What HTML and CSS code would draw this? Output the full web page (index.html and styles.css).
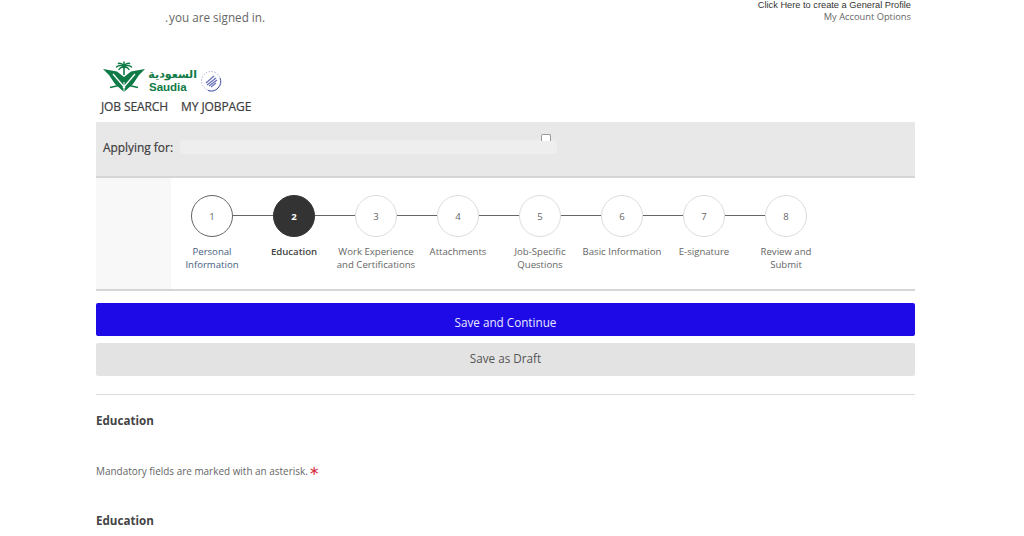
FILE: index.html
```html
<!DOCTYPE html>
<html lang="en">
<head>
<meta charset="utf-8">
<title>Saudia Careers - Education</title>
<link rel="stylesheet" href="styles.css">
</head>
<body>
<div class="page">
  <header class="top">
    <p class="signed">.<span>you are signed in.</span></p>
    <div class="account">
      <a class="general">Click Here to create a General Profile</a>
      <a class="options">My Account Options</a>
    </div>
  </header>
  <div class="logo">
    <svg class="emblem" width="44" height="32" viewBox="0 0 44 32" aria-hidden="true">
      <path fill="#0f7a45" d="M1 8 L15 10.500 L22 16 L29 10.500 L43 8 L37 14 L31 23 L22 31 L13 23 L7 14 Z"/>
      <path fill="none" stroke="#fff" stroke-width="1.300" d="M11 13 L23 27 M33 13 L21 27"/>
      <path fill="#fff" d="M21.500 21h1v10h-1z"/>
      <path fill="#0f7a45" d="M21.200 5h1.600v9h-1.600z"/>
      <path fill="none" stroke="#0f7a45" stroke-width="1.500" stroke-linecap="round" d="M22 5 L22 1 M22 5 C20 2.500 18 2 16.500 2.500 M22 5 C24 2.500 26 2 27.500 2.500 M22 5.500 C19 4 16 4.500 14.500 6 M22 5.500 C25 4 28 4.500 29.500 6 M22 6.500 C20 6 18 6.500 17 8.500 M22 6.500 C24 6 26 6.500 27 8.500"/>
      <path fill="none" stroke="#0f7a45" stroke-width="1.400" d="M8 26.500 L19 24 M36 26.500 L25 24"/>
    </svg>
    <div class="wordmark">
      <span class="ar" lang="ar" dir="rtl">السعودية</span>
      <span class="en">Saudia</span>
    </div>
    <svg class="skyteam" width="22" height="22" viewBox="0 0 22 22" aria-hidden="true">
      <circle cx="11" cy="11" r="9.500" fill="#fff" stroke="#aab0d4" stroke-width="1" stroke-dasharray="1.500 1.500"/>
      <path d="M20 8 A9.500 9.500 0 0 1 8 20.500" fill="none" stroke="#4a55a5" stroke-width="1"/>
      <path d="M6 13 L14 6 M7 15 L16 8 M9 16 L17 10 M11 17 L16 13" stroke="#6a72b8" stroke-width="1.300" fill="none"/>
    </svg>
  </div>
  <nav class="nav"><a>JOB SEARCH</a><a>MY JOBPAGE</a></nav>
  <section class="applying">
    <span class="applying-label">Applying for:</span>
    <span class="redacted"></span>
    <span class="check"></span>
  </section>
  <section class="stepper">
    <ol class="steps">
      <li class="step visited"><span class="dot">1</span><span class="label">Personal Information</span></li>
      <li class="step current"><span class="dot">2</span><span class="label">Education</span></li>
      <li class="step"><span class="dot">3</span><span class="label">Work Experience and Certifications</span></li>
      <li class="step"><span class="dot">4</span><span class="label">Attachments</span></li>
      <li class="step"><span class="dot">5</span><span class="label">Job-Specific Questions</span></li>
      <li class="step"><span class="dot">6</span><span class="label">Basic Information</span></li>
      <li class="step"><span class="dot">7</span><span class="label">E-signature</span></li>
      <li class="step narrow"><span class="dot">8</span><span class="label">Review and Submit</span></li>
    </ol>
  </section>
  <div class="actions">
    <button class="btn primary">Save and Continue</button>
    <button class="btn secondary">Save as Draft</button>
  </div>
  <hr class="rule">
  <h2 class="heading first">Education</h2>
  <p class="mandatory">Mandatory fields are marked with an asterisk.<span class="star">∗</span></p>
  <h2 class="heading second">Education</h2>
</div>
</body>
</html>
```

FILE: styles.css
```css
* { box-sizing: border-box; }
html, body { margin: 0; padding: 0; background: #fff; }
body { height: 536px; overflow: hidden; font-family: "Open Sans", "Liberation Sans", sans-serif; color: #555; }
.page { width: 819px; margin-left: 96px; }

.top { display: flex; justify-content: space-between; height: 57px; }
.signed { margin: 9px 0 0 69px; font-size: 11.700px; line-height: 16px; color: #666; }
.signed span { margin-left: 1px; }
.account { display: flex; flex-direction: column; align-items: flex-end; padding: 0 4px 0 0; line-height: 12px; margin-top: -1px; }
.general { color: #333; font-family: "Liberation Sans", Arial, sans-serif; font-size: 9.250px; }
.options { color: #666; font-size: 9.300px; }

.logo { display: flex; align-items: flex-start; height: 39px; padding: 4px 0 0 6px; }
.emblem { flex: none; }
.wordmark { display: flex; flex-direction: column; align-items: flex-start; margin-left: 3px; color: #0f7a45; width: 48px; padding-top: 8px; }
.ar { font-family: "DejaVu Sans", sans-serif; font-size: 11px; line-height: 12px; font-weight: 700; align-self: stretch; text-align: right; }
.en { font-family: "Liberation Sans", sans-serif; font-size: 11.500px; line-height: 12px; font-weight: 700; }
.skyteam { margin: 9px 0 0 3px; }

.nav { display: flex; gap: 13px; height: 26px; padding: 1px 0 0 5px; font-size: 12px; line-height: 20px; color: #3d3d3d; letter-spacing: -.1px; -webkit-text-stroke: .2px #3d3d3d; }

.applying { position: relative; display: flex; align-items: flex-start; height: 56px; background: #e8e8e8; border-bottom: 2px solid #d6d6d6; padding: 16px 0 0 7px; }
.applying-label { font-size: 11.900px; line-height: 18px; color: #3d3d3d; -webkit-text-stroke: .2px #3d3d3d; }
.redacted { width: 377px; height: 14px; margin: 2px 0 0 7px; background: #eeeeee; border-radius: 4px; }
.check { position: absolute; left: 445px; top: 12px; width: 10px; height: 7px; background: #fff; border: 1px solid #999; border-bottom: 0; border-radius: 2px 2px 0 0; }

.stepper { height: 113px; background: #f8f8f8; border-bottom: 2px solid #d6d6d6; padding-left: 75px; }
.steps { display: flex; height: 111px; margin: 0; padding: 17px 0 0; list-style: none; background: #fff; }
.step { position: relative; display: flex; flex-direction: column; align-items: center; width: 82px; }
.step:not(:last-child)::after { content: ""; position: absolute; left: 62px; top: 20px; width: 41px; height: 1px; background: #666; }
.dot { display: flex; align-items: center; justify-content: center; width: 42px; height: 42px; border: 1px solid #ddd; border-radius: 50%; font-size: 9.600px; color: #666; background: #fff; }
.label { width: 86px; margin-top: 9px; font-size: 9.600px; line-height: 12.500px; color: #666; text-align: center; }
.step.narrow .label { padding: 0 14px; }
.step.visited .dot { border-color: #666; }
.step.visited .label { color: #46607e; padding: 0 16px; }
.step.current .dot { background: #333; border-color: #333; color: #fff; font-weight: 700; }
.step.current .label { color: #444; font-weight: 600; }

.actions { display: flex; flex-direction: column; gap: 7px; padding-top: 12px; }
.btn { display: block; width: 100%; height: 33px; border: 0; border-radius: 2px; font: 400 11.700px/16px "Open Sans", sans-serif; padding: 0; }
.primary { background: #1d0ae6; color: #e8e8ff; padding-top: 4px; }
.secondary { background: #e3e3e3; color: #555; padding-bottom: 3px; }

.rule { height: 1px; margin: 18px 0 0; border: 0; background: #dcdcdc; }
.heading { margin: 0; font-size: 11.600px; line-height: 16px; font-weight: 700; color: #444; }
.heading.first { margin-top: 18px; }
.mandatory { margin: 34px 0 0; font-size: 9.950px; line-height: 16px; color: #666; }
.star { color: #d8303f; font-family: "DejaVu Sans", sans-serif; font-size: 13px; line-height: 10px; margin-left: 1px; }
.heading.second { margin-top: 34px; }
```
